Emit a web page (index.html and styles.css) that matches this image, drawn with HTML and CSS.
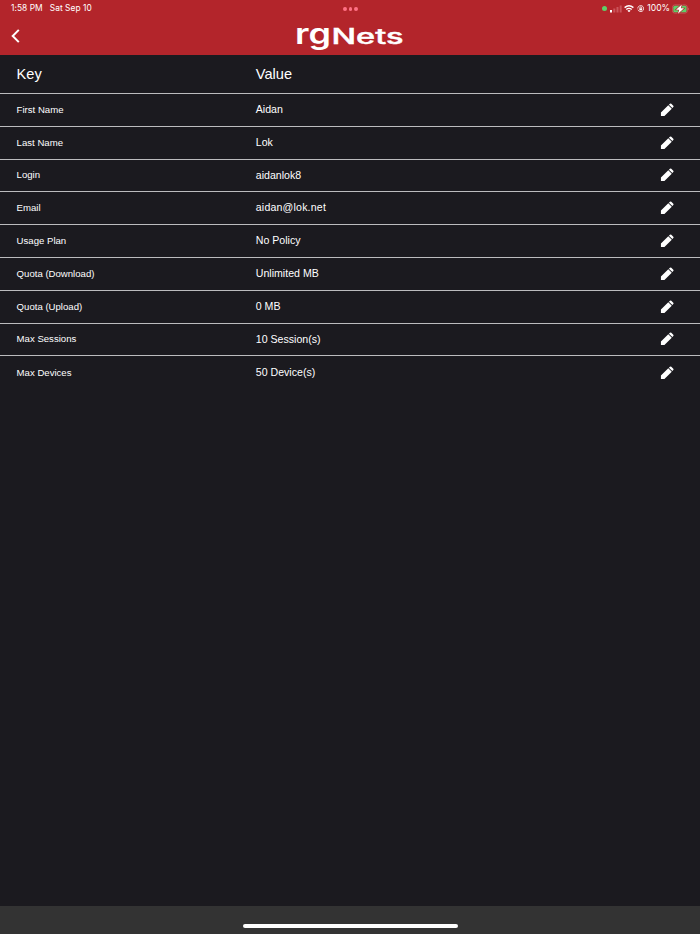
FILE: index.html
```html
<!DOCTYPE html>
<html lang="en">
<head>
<meta charset="utf-8">
<title>rgNets</title>
<link rel="stylesheet" href="styles.css">
</head>
<body>
<svg class="defs" aria-hidden="true">
  <symbol id="pencil" viewBox="0 0 24 24"><path d="M1.6 16.4 14.2 3.8l6 6L7.6 22.4H1.6zM15.3 2.8l1.7-1.6q1.2-1.1 2.4 0l3.4 3.4q1.1 1.2 0 2.4l-1.6 1.7z"/></symbol>
</svg>
<header class="top">
  <div class="status">
    <div class="clock"><span>1:58 PM</span><span>Sat Sep 10</span></div>
    <div class="dots"><i></i><i></i><i></i></div>
    <div class="indicators">
      <i class="camera"></i>
      <svg class="signal" viewBox="0 0 12 8"><path fill="#fff" d="M0 5h2v2.5H0z"/><path fill="#cb555b" d="M3.3 3.5h2v4h-2zM6.5 2h2v5.5h-2zM9.7.5h2v7h-2z"/></svg>
      <svg class="wifi" viewBox="0 0 20 15"><path fill="none" stroke="#fff" stroke-width="2.8" d="M1.2 5.3q8.8-7.4 17.6 0M4.5 9q5.5-4.6 11 0"/><path fill="#fff" d="m10 14.5-3.2-3.2q3.2-2.5 6.4 0z"/></svg>
      <svg class="lock" viewBox="0 0 16 16"><path fill="none" stroke="#fff" stroke-width="1.7" d="M3.2 3.4A6.4 6.4 0 1 1 2 10M1.6 7.5A6.4 6.4 0 0 1 3.6 3M6 7.5V6a2 2 0 0 1 4 0v1.5"/><path fill="#fff" d="M5 7.2h6v4.3H5z"/></svg>
      <span class="percent">100%</span>
      <svg class="battery" viewBox="0 0 18 10"><rect x=".4" y=".9" width="15" height="8.2" rx="2.4" fill="none" stroke="#cb666b" stroke-width=".7"/><rect x="1.3" y="1.8" width="13.2" height="6.4" rx="1.5" fill="#5fce68"/><path fill="#d6777c" d="M16.2 3.6q1.4 1.4 0 2.8z"/><path fill="#fff" stroke="#b3252b" stroke-width="1.2" paint-order="stroke" d="M9.8.4 4 5.7h3.2L6 9.7l6-5.4H8.8z"/></svg>
    </div>
  </div>
  <div class="nav">
    <svg class="back" viewBox="0 0 9 14"><path fill="none" stroke="#fff" stroke-width="2" d="M7.8.9 1.7 7l6.1 6.1"/></svg>
    <svg class="logo" viewBox="0 0 108 38" role="img" aria-label="rgNets">
      <text class="mark" x="-1" y="27" textLength="36" lengthAdjust="spacingAndGlyphs">rg</text>
      <text class="word" x="35.5" y="27" textLength="72" lengthAdjust="spacingAndGlyphs">Nets</text>
    </svg>
  </div>
</header>
<main class="table">
  <div class="row head"><span>Key</span><span>Value</span></div>
  <div class="row"><span class="key">First Name</span><span class="value">Aidan</span><svg class="edit"><use href="#pencil"/></svg></div>
  <div class="row"><span class="key">Last Name</span><span class="value">Lok</span><svg class="edit"><use href="#pencil"/></svg></div>
  <div class="row"><span class="key">Login</span><span class="value">aidanlok8</span><svg class="edit"><use href="#pencil"/></svg></div>
  <div class="row"><span class="key">Email</span><span class="value email">aidan@lok.net</span><svg class="edit"><use href="#pencil"/></svg></div>
  <div class="row"><span class="key">Usage Plan</span><span class="value">No Policy</span><svg class="edit"><use href="#pencil"/></svg></div>
  <div class="row"><span class="key">Quota (Download)</span><span class="value">Unlimited MB</span><svg class="edit"><use href="#pencil"/></svg></div>
  <div class="row"><span class="key">Quota (Upload)</span><span class="value">0 MB</span><svg class="edit"><use href="#pencil"/></svg></div>
  <div class="row"><span class="key">Max Sessions</span><span class="value">10 Session(s)</span><svg class="edit"><use href="#pencil"/></svg></div>
  <div class="row"><span class="key">Max Devices</span><span class="value">50 Device(s)</span><svg class="edit"><use href="#pencil"/></svg></div>
</main>
<footer class="bottom"><div class="home"></div></footer>
</body>
</html>
```
FILE: styles.css
```css
* { box-sizing: border-box; }
body {
  margin: 0;
  height: 934px;
  display: flex;
  flex-direction: column;
  overflow: hidden;
  background: #1b1a1f;
  color: #fff;
  font-family: "Liberation Sans", Arial, sans-serif;
}
svg { display: block; flex: none; }
.defs { width: 0; height: 0; position: absolute; }
.top { height: 55px; background: #b3252b; flex: none; }
.status {
  height: 17px;
  padding: 0 10px 0 11px;
  display: grid;
  grid-template-columns: 1fr auto 1fr;
  align-items: center;
  font: 8.4px/17px Inter, sans-serif;
}
.clock { display: flex; gap: 7px; letter-spacing: 0.05px; white-space: nowrap; }
.dots { display: flex; gap: 2px; padding-top: 1px; }
.dots i { width: 3.8px; height: 3.8px; border-radius: 50%; background: #ff7185; }
.indicators { display: flex; align-items: center; justify-content: flex-end; }
.camera { width: 5px; height: 5px; border-radius: 50%; background: #5fce68; margin-right: 3px; }
.signal { width: 12px; height: 8px; margin-right: 2px; }
.wifi { width: 10px; height: 7.5px; margin-right: 3px; }
.lock { width: 7.5px; height: 7.5px; margin-right: 3px; }
.percent { font-size: 8.6px; margin-right: 2px; }
.battery { width: 18px; height: 10px; }
.nav { height: 38px; display: grid; grid-template-columns: 296px 108px; align-items: center; }
.back { width: 9px; height: 14px; margin-left: 11px; }
.logo { width: 108px; height: 38px; fill: #fff; overflow: visible; }
.mark { font: 600 28px/1 Inter, sans-serif; }
.word { font: 500 21px/1 Inter, sans-serif; stroke: #fff; stroke-width: 0.4px; }
.table { flex: 1; }
.row {
  height: 32.8px;
  padding: 0 26.5px 0 16.6px;
  display: grid;
  grid-template-columns: 239.2px 1fr 14px;
  align-items: center;
  border-bottom: 1px solid #bcbcbe;
}
.row:last-child { border-bottom: 0; }
.head { height: 39px; font-size: 14.6px; }
.key { font-size: 9.6px; padding-bottom: 1px; }
.value { font-size: 10.6px; padding-bottom: 1.6px; }
.email { letter-spacing: 0.18px; }
.edit { width: 14px; height: 14px; fill: #fff; }
.bottom {
  height: 28px;
  padding-top: 18px;
  background: #333;
  flex: none;
}
.home { width: 215px; height: 4px; margin: 0 auto; border-radius: 2px; background: #fff; }
```
